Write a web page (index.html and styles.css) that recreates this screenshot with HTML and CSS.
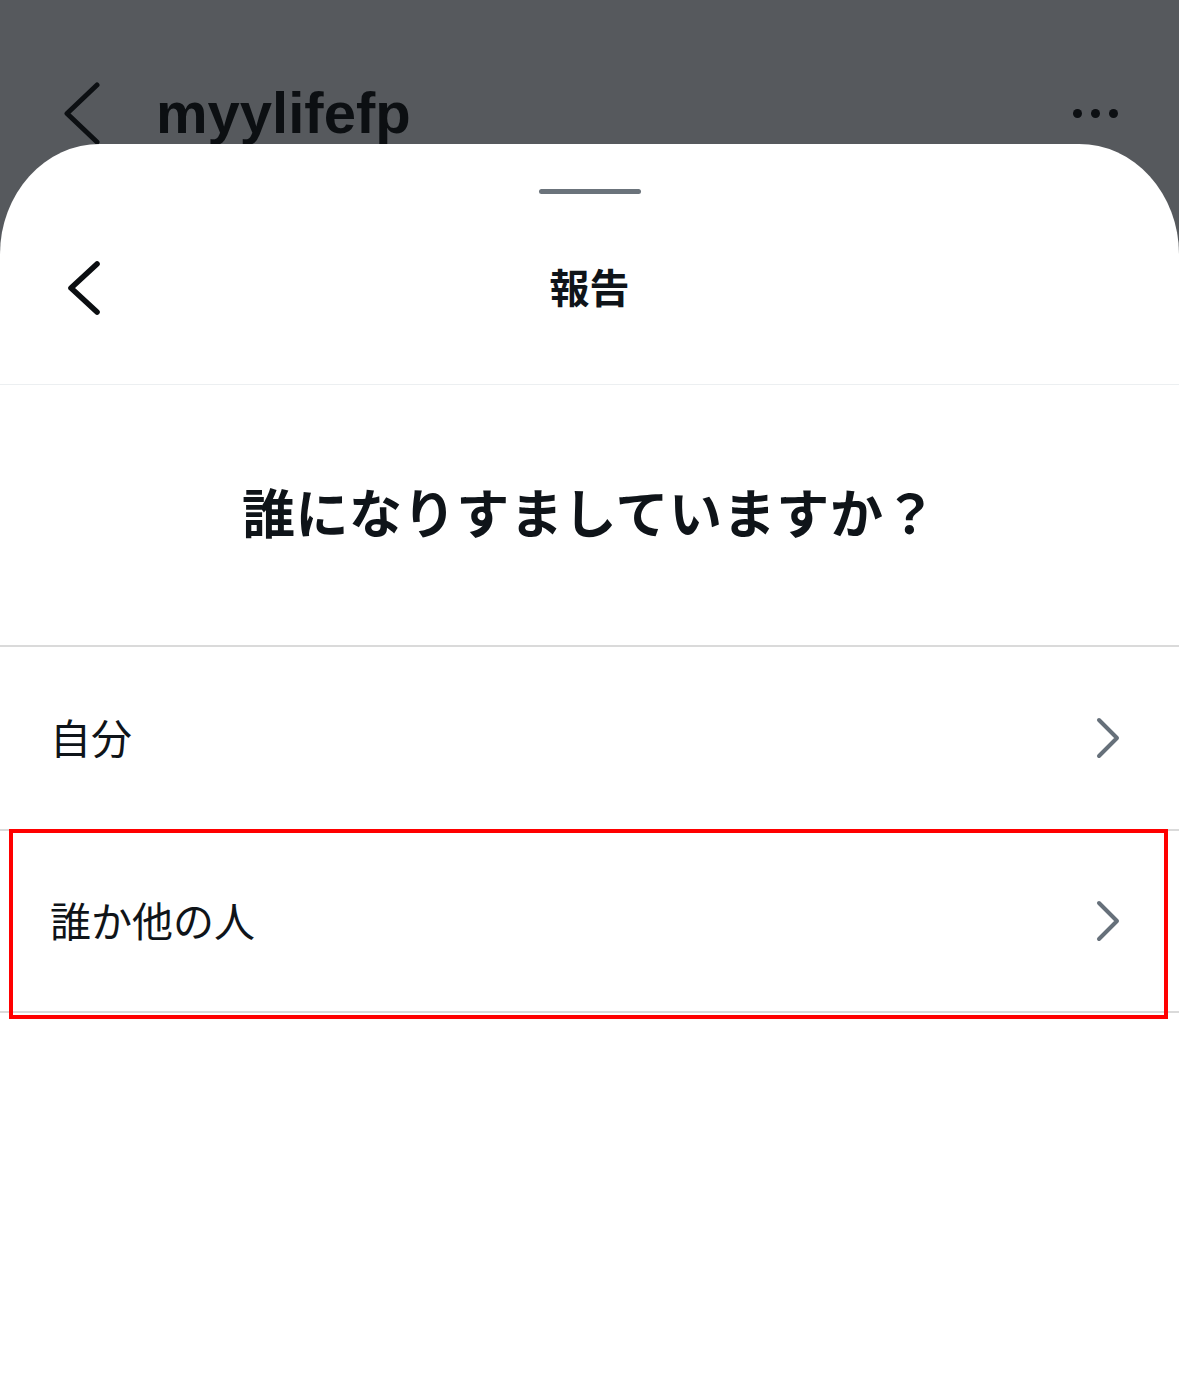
FILE: index.html
```html
<!DOCTYPE html>
<html lang="ja">
<head>
<meta charset="utf-8">
<title>報告</title>
<link rel="stylesheet" href="styles.css">
</head>
<body>
<div class="topbar">
  <svg class="top-back" width="44" height="64" viewBox="0 0 44 64"><path d="M41 3 L11 31.5 L41 60" fill="none" stroke="#0c0f12" stroke-width="5" stroke-linecap="round" stroke-linejoin="round"/></svg>
  <div class="top-title">myylifefp</div>
  <div class="dots"><span></span><span></span><span></span></div>
</div>
<div class="sheet">
  <div class="handle"></div>
  <div class="header">
    <div class="header-left">
      <svg width="40" height="54" viewBox="0 0 40 54"><path d="M33 3 L7 27 L33 51" fill="none" stroke="#0b0e11" stroke-width="5.6" stroke-linecap="round" stroke-linejoin="round"/></svg>
    </div>
    <div class="header-title">報告</div>
    <div></div>
  </div>
  <div class="divider-light"></div>
  <div class="question">誰になりすましていますか？</div>
  <div class="divider"></div>
  <div class="row">
    <span class="row-label">自分</span>
    <svg class="chev" width="26" height="44" viewBox="0 0 26 44"><path d="M4 4 L22 22 L4 40" fill="none" stroke="#66707a" stroke-width="4" stroke-linecap="round" stroke-linejoin="round"/></svg>
  </div>
  <div class="divider"></div>
  <div class="row row-second">
    <span class="row-label">誰か他の人</span>
    <svg class="chev" width="26" height="44" viewBox="0 0 26 44"><path d="M4 4 L22 22 L4 40" fill="none" stroke="#66707a" stroke-width="4" stroke-linecap="round" stroke-linejoin="round"/></svg>
    <div class="highlight"></div>
  </div>
  <div class="divider"></div>
</div>
</body>
</html>
```
FILE: styles.css
```css
html, body {
  margin: 0;
  padding: 0;
}
body {
  background: #56595d;
  width: 1179px;
  height: 1392px;
  overflow: hidden;
  font-family: "Noto Sans CJK JP", "Noto Sans", sans-serif;
  color: #0f1419;
}
.topbar {
  height: 144px;
  box-sizing: border-box;
  display: flex;
  align-items: flex-start;
  padding: 82px 61px 0 56px;
  overflow: hidden;
}
.top-back {
  flex: none;
}
.top-title {
  margin-left: 56px;
  margin-top: 2px;
  font-family: "Liberation Sans", Arial, sans-serif;
  font-weight: bold;
  font-size: 58px;
  line-height: 58px;
  letter-spacing: 0;
  color: #0c0f12;
}
.dots {
  margin-left: auto;
  margin-top: 27px;
  display: flex;
  gap: 9px;
}
.dots span {
  width: 9px;
  height: 9px;
  border-radius: 50%;
  background: #0c0f12;
}
.sheet {
  background: #ffffff;
  height: 1248px;
  border-radius: 100px 100px 0 0 / 110px 110px 0 0;
  overflow: hidden;
}
.handle {
  width: 102px;
  height: 5px;
  border-radius: 3px;
  background: #6b737b;
  margin: 45px auto 0;
}
.header {
  height: 190px;
  display: grid;
  grid-template-columns: 1fr auto 1fr;
  align-items: center;
}
.header-left {
  padding-left: 64px;
  display: flex;
  align-items: center;
  margin-top: -3px;
}
.header-title {
  font-size: 40px;
  font-weight: bold;
  line-height: 1;
  padding-bottom: 7px;
}
.divider-light {
  height: 1px;
  background: #eceff1;
}
.question {
  height: 260px;
  box-sizing: border-box;
  padding-bottom: 8px;
  display: flex;
  align-items: center;
  justify-content: center;
  font-size: 53px;
  font-weight: bold;
  line-height: 1;
  letter-spacing: 0.6px;
}
.divider {
  height: 2px;
  background: #dadada;
}
.row {
  height: 182px;
  display: flex;
  align-items: center;
  justify-content: space-between;
  padding: 0 58px 0 50px;
  position: relative;
}
.row-second {
  height: 180px;
}
.row-label {
  font-size: 41px;
  line-height: 1;
  padding-bottom: 4px;
}
.chev {
  flex: none;
}
.highlight {
  position: absolute;
  top: -2px;
  left: 9px;
  right: 11px;
  bottom: -8px;
  border: 4px solid #ff0000;
  box-sizing: border-box;
  z-index: 1;
}
```
